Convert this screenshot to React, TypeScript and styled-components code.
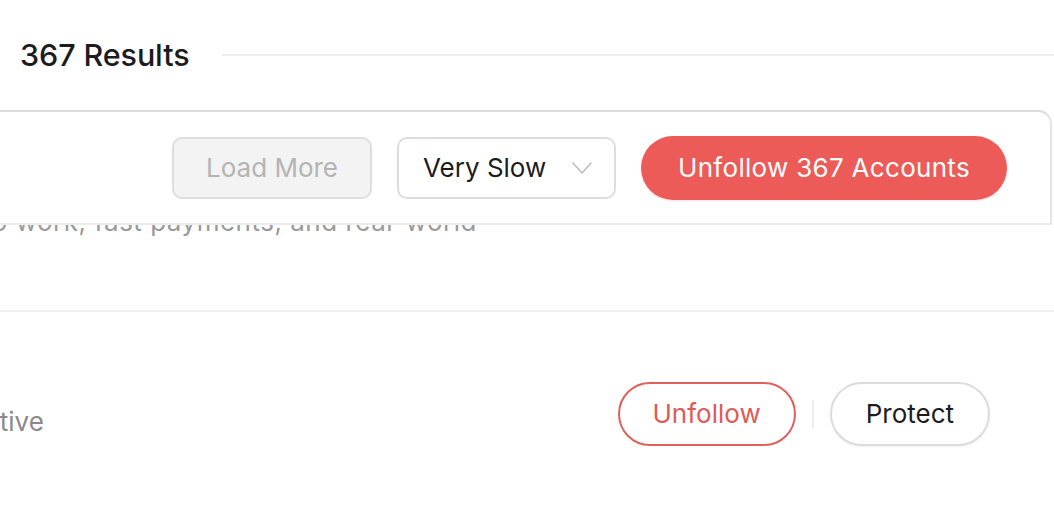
import React from "react";
import styled, { createGlobalStyle } from "styled-components";

const GlobalStyle = createGlobalStyle`
  html, body {
    margin: 0;
    padding: 0;
    background: #ffffff;
    font-family: Inter, "Noto Sans", "Liberation Sans", sans-serif;
    overflow: hidden;
  }
  * { box-sizing: border-box; }
`;

const Page = styled.div`
  width: 1054px;
  height: 510px;
  overflow: hidden;
  background: #fff;
`;

const Header = styled.header`
  height: 110px;
  display: flex;
  align-items: center;
  gap: 32px;
  padding-left: 20px;
`;

const Title = styled.h2`
  margin: 0;
  font-size: 30.5px;
  font-weight: 500;
  color: #1c1c1c;
  letter-spacing: -0.1px;
  white-space: nowrap;
  transform: translateY(-1px);
`;

const HeaderRule = styled.div`
  flex: 1;
  height: 2px;
  background: #eeeeee;
`;

const ListArea = styled.section`
  position: relative;
`;

const ActionBar = styled.div`
  position: absolute;
  top: 0;
  left: -20px;
  right: 2px;
  height: 115px;
  z-index: 2;
  display: flex;
  align-items: center;
  justify-content: flex-end;
  gap: 25px;
  padding-right: 43px;
  background: #fff;
  border: 2px solid #dcdcdc;
  border-right-color: #e4e4e4;
  border-bottom-color: #ececec;
  border-top-right-radius: 14px;
  border-top-left-radius: 14px;
`;

const BaseButton = styled.button`
  font-family: inherit;
  font-size: 26px;
  font-weight: 400;
  line-height: 1;
  display: inline-flex;
  align-items: center;
  justify-content: center;
  cursor: pointer;
  white-space: nowrap;
`;

const LoadMoreButton = styled(BaseButton)`
  height: 62px;
  width: 200px;
  border-radius: 10px;
  border: 2px solid #dedede;
  background: #f3f3f3;
  color: #b4b4b4;
`;

const SpeedSelect = styled(BaseButton)`
  height: 62px;
  width: 219px;
  justify-content: space-between;
  padding: 0 22px 0 24px;
  border-radius: 10px;
  border: 2px solid #dddddd;
  background: #fff;
  color: #1c1c1c;
`;

const BulkButton = styled(BaseButton)`
  height: 64px;
  width: 366px;
  border-radius: 32px;
  border: none;
  background: #ec5b57;
  color: #fff;
  letter-spacing: 0.3px;
  box-shadow: 0 1px 3px rgba(236, 91, 87, 0.18);
`;

const ItemRow = styled.div<{ $height: number }>`
  height: ${(p) => p.$height}px;
  display: flex;
  align-items: center;
  border-bottom: 2px solid #efefef;
`;

const FirstItem = styled.div`
  height: 202px;
  padding-top: 94px;
  border-bottom: 2px solid #efefef;
`;

const Description = styled.p<{ $shift: number }>`
  margin: 0 0 0 ${(p) => -p.$shift}px;
  font-size: 26px;
  line-height: 36px;
  letter-spacing: 0.5px;
  color: #9a9a9a;
  white-space: nowrap;
`;

const ItemInfo = styled.div`
  flex: 1;
  padding-top: 16px;
`;

const Status = styled.span<{ $shift: number }>`
  display: block;
  margin-left: ${(p) => -p.$shift}px;
  font-size: 26px;
  line-height: 36px;
  color: #8a8a8a;
  white-space: nowrap;
`;

const ItemActions = styled.div`
  display: flex;
  align-items: center;
  gap: 16px;
  padding-right: 64px;
`;

const PillButton = styled(BaseButton)<{ $danger?: boolean }>`
  height: 64px;
  padding: 0 ${(p) => (p.$danger ? 33 : 34)}px;
  border-radius: 32px;
  background: #fff;
  border: 2px solid ${(p) => (p.$danger ? "#e0605b" : "#dcdcdc")};
  color: ${(p) => (p.$danger ? "#e05a55" : "#1c1c1c")};
  box-shadow: ${(p) => (p.$danger ? "none" : "0 1px 2px rgba(0,0,0,0.06)")};
`;

const ActionDivider = styled.div`
  width: 2px;
  height: 28px;
  background: #ececec;
`;

const Chevron = () => (
  <svg width="20" height="12" viewBox="0 0 20 12" fill="none">
    <polyline
      points="1,1 10,11 19,1"
      stroke="#bdbdbd"
      strokeWidth="1.6"
      strokeLinecap="round"
      strokeLinejoin="round"
    />
  </svg>
);

export default function App() {
  return (
    <>
      <GlobalStyle />
      <Page>
        <Header>
          <Title>367 Results</Title>
          <HeaderRule />
        </Header>
        <ListArea>
          <ActionBar>
            <LoadMoreButton disabled>Load More</LoadMoreButton>
            <SpeedSelect>
              <span>Very Slow</span>
              <Chevron />
            </SpeedSelect>
            <BulkButton>Unfollow 367 Accounts</BulkButton>
          </ActionBar>
          <FirstItem>
            <Description $shift={17}>to work, fast payments, and real-world</Description>
          </FirstItem>
          <ItemRow $height={206}>
            <ItemInfo>
              <Status $shift={52}>Inactive</Status>
            </ItemInfo>
            <ItemActions>
              <PillButton $danger>Unfollow</PillButton>
              <ActionDivider />
              <PillButton>Protect</PillButton>
            </ItemActions>
          </ItemRow>
        </ListArea>
      </Page>
    </>
  );
}
